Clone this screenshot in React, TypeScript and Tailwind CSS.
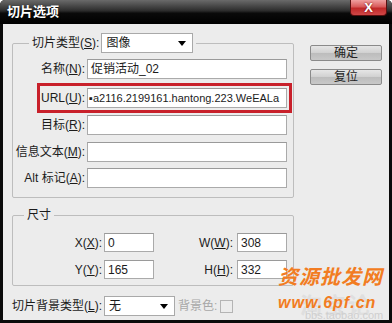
import React from "react";

function Key({ label, k }: { label: string; k: string }) {
  return (
    <>
      {label}(<span className="underline">{k}</span>):
    </>
  );
}

function Select({ value, w }: { value: string; w: string }) {
  return (
    <div className={`${w} h-[20px] shrink-0 flex items-center justify-between border border-[#a9a9a9] bg-white pl-[4px] pr-[6px]`}>
      <span className="text-[12px] leading-none">{value}</span>
      <span className="w-0 h-0 border-l-[4px] border-r-[4px] border-t-[5px] border-l-transparent border-r-transparent border-t-black" />
    </div>
  );
}

function Field({ children, cls }: { children?: React.ReactNode; cls: string }) {
  return (
    <div className={`${cls} shrink-0 flex items-center overflow-hidden border border-[#aaaaaa] border-t-[#9a9a9a] bg-white px-[3px] text-[12px] whitespace-nowrap`}>
      {children}
    </div>
  );
}

function Row({ label, children }: { label: React.ReactNode; children?: React.ReactNode }) {
  return (
    <div className="flex items-center gap-[2px]">
      <span className="flex-1 text-right whitespace-nowrap">{label}</span>
      {children}
    </div>
  );
}

function Button({ label }: { label: string }) {
  return (
    <button className="w-[72px] h-[16px] flex items-center justify-center rounded-[2px] border border-[#8a8a8a] bg-[linear-gradient(#e6e6e6,#d0d0d0_50%,#bcbcbc_51%,#c8c8c8)] text-[12px] leading-none text-[#222]">
      {label}
    </button>
  );
}

export default function App() {
  return (
    <div className="relative w-[392px] h-[323px] overflow-hidden rounded-t-[5px] bg-[#0a0a0a] flex flex-col font-['Liberation_Sans','Noto_Sans_CJK_SC',sans-serif] text-[12px] text-[#1b1b1b]">
      {/* title bar */}
      <div className="relative h-[24px] shrink-0 flex items-center px-[7px] bg-[linear-gradient(#6a6a6a,#2c2c2c_45%,#0a0a0a_55%,#000)]">
        <span className="text-[13px] font-bold text-white [text-shadow:0_1px_2px_#000]">切片选项</span>
        <div className="absolute right-[5px] top-0 w-[37px] h-[16px] flex items-center justify-center rounded-b-[4px] border border-t-0 border-[#5a1010] bg-[linear-gradient(#f0a0a0,#d85a5a_45%,#c02828_55%,#d04848)]">
          <span className="text-[13px] font-bold leading-none text-white [text-shadow:0_0_2px_#600]">X</span>
        </div>
      </div>

      {/* body */}
      <div className="flex-1 mx-[3px] mb-[3px] bg-[#ececec] flex pl-[9px] pt-[9px]">
        <div className="w-[282px] flex flex-col">
          <fieldset className="m-0 p-0 pt-[6px] pb-[9px] border border-[#bdbdbd] rounded-[2px] min-w-0">
            <legend className="ml-[16px] px-[3px] flex items-center gap-[2px]">
              <span className="whitespace-nowrap"><Key label="切片类型" k="S" /></span>
              <Select value="图像" w="w-[92px]" />
            </legend>
            <div className="flex flex-col">
              <div className="mr-[6px]">
                <Row label={<Key label="名称" k="N" />}>
                  <Field cls="w-[200px] h-[20px]">促销活动_02</Field>
                </Row>
              </div>
              <div className="mt-[4px] ml-[24px] mr-[1px] border-[3px] border-[#c8202a] py-[2px] pr-[2px]">
                <Row label={<Key label="URL" k="U" />}>
                  <Field cls="w-[200px] h-[20px] pl-[1px]">
                    <span className="text-[11px]">▪a2116.2199161.hantong.223.WeEALa</span>
                  </Field>
                </Row>
              </div>
              <div className="mt-[2px] mr-[6px]">
                <Row label={<Key label="目标" k="R" />}>
                  <Field cls="w-[200px] h-[20px]" />
                </Row>
              </div>
              <div className="mt-[7px] mr-[6px]">
                <Row label={<Key label="信息文本" k="M" />}>
                  <Field cls="w-[200px] h-[20px]" />
                </Row>
              </div>
              <div className="mt-[6px] mr-[6px]">
                <Row label={<Key label="Alt 标记" k="A" />}>
                  <Field cls="w-[200px] h-[20px]" />
                </Row>
              </div>
            </div>
          </fieldset>

          <fieldset className="mt-[9px] m-0 p-0 pt-[10px] pb-[6px] pr-[6px] border border-[#bdbdbd] rounded-[2px] min-w-0">
            <legend className="ml-[11px] px-[3px] leading-[16px]">尺寸</legend>
            <div className="flex items-center">
              <div className="w-[141px] flex items-center justify-end gap-[2px]">
                <span><Key label="X" k="X" /></span>
                <Field cls="w-[50px] h-[19px]">0</Field>
              </div>
              <div className="flex-1 flex items-center justify-end gap-[4px]">
                <span><Key label="W" k="W" /></span>
                <Field cls="w-[50px] h-[19px]">308</Field>
              </div>
            </div>
            <div className="mt-[8px] flex items-center">
              <div className="w-[141px] flex items-center justify-end gap-[2px]">
                <span><Key label="Y" k="Y" /></span>
                <Field cls="w-[50px] h-[19px]">165</Field>
              </div>
              <div className="flex-1 flex items-center justify-end gap-[4px]">
                <span><Key label="H" k="H" /></span>
                <Field cls="w-[50px] h-[19px]">332</Field>
              </div>
            </div>
          </fieldset>

          <div className="mt-[10px] flex items-center">
            <span className="w-[90px] text-right whitespace-nowrap"><Key label="切片背景类型" k="L" /></span>
            <div className="ml-[2px]"><Select value="无" w="w-[71px]" /></div>
            <span className="ml-[3px] text-[#a8a8a8]">背景色:</span>
            <div className="ml-[3px] w-[13px] h-[13px] border border-[#b4b4b4]" />
          </div>
        </div>

        <div className="ml-[16px] mt-[12px] flex flex-col gap-[8px]">
          <Button label="确定" />
          <Button label="复位" />
        </div>
      </div>

      {/* watermark */}
      <div className="absolute left-[300px] top-[289px] text-[22px] font-bold text-[#dcdcdc] opacity-80 tracking-[2px]">淘宝论坛</div>
      <div className="absolute left-[278px] top-[267px] text-[20px] font-bold italic leading-none text-[#f27c22] tracking-[1px]">资源批发网</div>
      <div className="absolute left-[278px] top-[295px] text-[16px] font-bold italic leading-none text-[#f27c22] tracking-[1px]">www.6pf.cn</div>
      <div className="absolute left-[305px] top-[310px] text-[11px] leading-none text-[#cfcfcf]">bbs.taobao.com</div>
    </div>
  );
}
